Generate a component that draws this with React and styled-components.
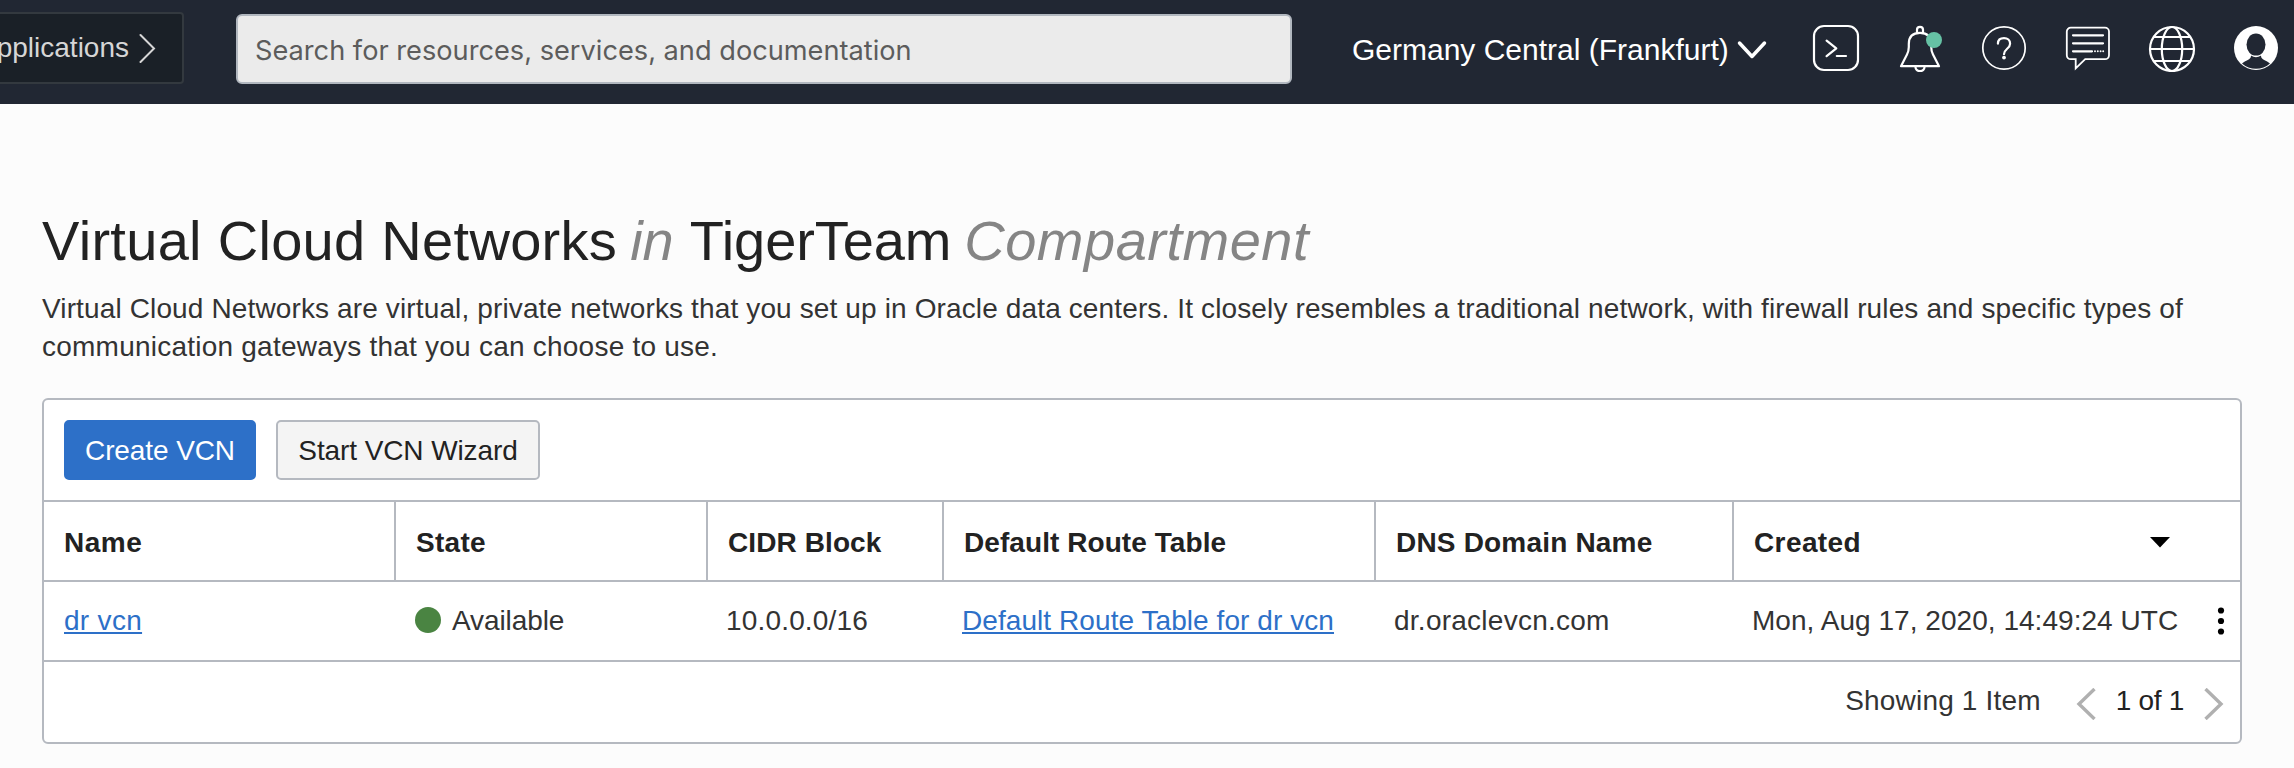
import React from "react";
import styled, { createGlobalStyle } from "styled-components";

const line = "#b5b9c0";

const GlobalStyle = createGlobalStyle`
  *, *::before, *::after { box-sizing: border-box; }
  body {
    margin: 0;
    background: #fcfcfc;
    color: #333;
    font-family: "Liberation Sans", Arial, sans-serif;
    font-size: 28px;
    overflow: hidden;
  }
`;

const Page = styled.div`
  width: 2294px;
  height: 768px;
  overflow: hidden;
`;

const TopBar = styled.header`
  display: flex;
  height: 104px;
  padding-right: 14px;
  background: #212733;
  color: #fff;
`;

const AppsButton = styled.div`
  display: flex;
  align-items: center;
  justify-content: flex-end;
  gap: 10px;
  flex: none;
  width: 184px;
  height: 72px;
  margin-top: 12px;
  padding-right: 26px;
  background: #1a2027;
  border: 2px solid #33393f;
  border-left: 0;
  border-radius: 0 4px 4px 0;
  color: #d6d6d6;
  white-space: nowrap;
`;

const SearchBox = styled.div`
  flex: none;
  width: 1056px;
  height: 70px;
  margin: 14px 0 0 52px;
  padding: 1px 0 0 17px;
  background: #ebebeb;
  border: 2px solid #b1b7bf;
  border-radius: 6px;
  color: #5c5c5c;
  font-family: Inter, sans-serif;
  font-size: 27.2px;
  line-height: 67px;
  white-space: nowrap;
`;

const Region = styled.div`
  display: flex;
  align-items: center;
  gap: 7px;
  height: 100px;
  margin-left: 60px;
  font-size: 30px;
  white-space: nowrap;
`;

const IconRow = styled.nav`
  display: flex;
  align-items: center;
  gap: 36px;
  height: 96px;
  margin-left: auto;
`;

const IconSvg = styled.svg`
  display: block;
  width: 48px;
  height: 48px;
  fill: none;
  stroke: #fff;
  stroke-width: 2.2;
  stroke-linecap: round;
  stroke-linejoin: round;
`;

const Glyph = styled.svg`
  display: block;
  flex: none;
  fill: none;
  stroke: currentColor;
`;

const Main = styled.main`
  padding: 105px 52px 0 42px;
`;

const Title = styled.h1`
  display: flex;
  align-items: baseline;
  gap: 13px;
  margin: 0;
  color: #222;
  font-size: 56px;
  font-weight: 400;
  line-height: 64px;
`;

const TitlePart = styled.span`
  letter-spacing: ${(p) => p.$track || 0}px;
`;

const TitleMuted = styled.em`
  margin-right: ${(p) => p.$after || 0}px;
  color: #858585;
  letter-spacing: ${(p) => p.$track || 0}px;
`;

const Intro = styled.p`
  margin: 17px 0 0;
  line-height: 38px;
  white-space: nowrap;
`;

const Text = styled.span`
  letter-spacing: ${(p) => p.$track || 0}px;
  white-space: nowrap;
`;

const Panel = styled.section`
  width: 2200px;
  margin-top: 32px;
  background: #fff;
  border: 2px solid ${line};
  border-radius: 6px;
`;

const Toolbar = styled.div`
  display: flex;
  gap: 20px;
  padding: 20px;
`;

const Button = styled.button`
  width: ${(p) => p.$width}px;
  height: 60px;
  padding: 2px 0 0;
  border: 2px solid ${(p) => (p.$primary ? "#2d70c8" : line)};
  border-radius: 5px;
  background: ${(p) => (p.$primary ? "#2d70c8" : "#f4f4f4")};
  color: ${(p) => (p.$primary ? "#fff" : "#222")};
  font: inherit;
  letter-spacing: -0.1px;
  white-space: nowrap;
`;

const Row = styled.div`
  display: grid;
  grid-template-columns: 350px 312px 236px 432px 358px 508px;
  height: 80px;
  border-top: 2px solid ${line};
`;

const HeadCell = styled.div`
  display: flex;
  align-items: center;
  justify-content: space-between;
  padding: 3px 70px 0 20px;
  color: #222;
  font-weight: 700;
  white-space: nowrap;

  & + & { border-left: 2px solid ${line}; }
  &:not(:last-child) { padding-right: 0; }
`;

const Cell = styled.div`
  display: flex;
  align-items: center;
  justify-content: ${(p) => (p.$spread ? "space-between" : "flex-start")};
  padding: 0 15px 0 20px;
`;

const Link = styled.a`
  color: #2d70c8;
  letter-spacing: ${(p) => p.$track || 0}px;
  text-decoration: underline;
  text-decoration-thickness: 2px;
  text-underline-offset: 2px;
  white-space: nowrap;
`;

const StatusDot = styled.span`
  flex: none;
  width: 26px;
  height: 26px;
  margin: 0 11px 2px 1px;
  border-radius: 50%;
  background: #4a8442;
`;

const Footer = styled.footer`
  display: flex;
  align-items: center;
  justify-content: flex-end;
  height: 82px;
  padding: 0 16px 2px 0;
  border-top: 2px solid ${line};
`;

const Pager = styled.div`
  display: flex;
  align-items: center;
  gap: 20px;
  margin-left: 35px;
  color: #222;
`;

const PagerArrow = styled(Glyph)`
  margin-top: 5px;
  color: #b0b0b0;
`;

const TerminalIcon = () => (
  <IconSvg viewBox="0 0 48 48">
    <rect x="2" y="2" width="44" height="44" rx="10" />
    <path d="M14.6 16.6 24.3 24.4 14.6 32.2M24.8 32H34" />
  </IconSvg>
);

const BellIcon = () => (
  <IconSvg viewBox="0 0 48 48">
    <path d="M21 8.5V5.8a3 3 0 0 1 6 0v2.7" />
    <path d="M5 42.2 11 30.5Q12.8 26.8 12.8 23V20C12.8 12.5 17 8.8 24 8.8S35.2 12.5 35.2 20v3Q35.2 26.8 37 30.5L43 42.2Z" />
    <path d="M19.4 42.6a4.6 4.6 0 0 0 9.2 0" />
    <circle cx="38" cy="16" r="8" fill="#66c2a5" stroke="none" />
  </IconSvg>
);

const HelpIcon = () => (
  <IconSvg viewBox="0 0 48 48">
    <circle cx="24" cy="24" r="21.2" strokeWidth="1.7" />
    <path d="M17.9 19.6C18 16.2 20.4 14.2 24 14.2s6.1 2.1 6.1 5.5C30.1 24.6 24 25 24 30.2" />
    <circle cx="24" cy="33.6" r="1.9" fill="#fff" stroke="none" />
  </IconSvg>
);

const ChatIcon = () => (
  <IconSvg viewBox="0 0 48 48">
    <path
      strokeWidth="1.8"
      strokeLinejoin="miter"
      d="M6.8 3.6H41a4 4 0 0 1 4 4v23.6a4 4 0 0 1-4 4H21.2L11.7 44.4V35.2H6.8a4 4 0 0 1-4-4V7.6a4 4 0 0 1 4-4Z"
    />
    <path d="M9 11.3H39M9 19.3H39M9 27.3H28" />
    <path d="M31 27.3h.01M33.8 27.3h.01M36.6 27.3h.01M39.2 27.3h.01" strokeWidth="1.9" />
  </IconSvg>
);

const GlobeIcon = () => (
  <IconSvg viewBox="0 0 48 48">
    <circle cx="24" cy="25" r="22" />
    <ellipse cx="24" cy="25" rx="10.2" ry="22" />
    <path d="M2 25H46M6.2 13H41.8M6.2 37H41.8" />
  </IconSvg>
);

const UserIcon = () => (
  <IconSvg viewBox="0 0 48 48">
    <circle cx="24" cy="24" r="22" fill="#fff" stroke="none" />
    <g fill="#212733" stroke="none">
      <ellipse cx="24" cy="20.6" rx="9.5" ry="11" />
      <path d="M19 31.6C19.2 36 13.4 36.6 10 39.4A20.8 20.8 0 0 0 38 39.4C34.6 36.6 28.8 36 29 31.6Q24 34.8 19 31.6Z" />
    </g>
  </IconSvg>
);

export default function App() {
  return (
    <Page>
      <GlobalStyle />
      <TopBar>
        <AppsButton>
          <span>Applications</span>
          <Glyph width="17" height="30" viewBox="0 0 17 30" strokeWidth="2" strokeLinecap="round">
            <path d="M1.5 2 15 15.5 1.5 29" />
          </Glyph>
        </AppsButton>
        <SearchBox>Search for resources, services, and documentation</SearchBox>
        <Region>
          <span>Germany Central (Frankfurt)</span>
          <Glyph width="32" height="20" viewBox="0 0 32 20" strokeWidth="3.5" strokeLinecap="round" strokeLinejoin="round">
            <path d="M3.5 3 16 16.5 28.5 3" />
          </Glyph>
        </Region>
        <IconRow>
          <TerminalIcon />
          <BellIcon />
          <HelpIcon />
          <ChatIcon />
          <GlobeIcon />
          <UserIcon />
        </IconRow>
      </TopBar>

      <Main>
        <Title>
          <TitlePart $track={0.3}>Virtual Cloud Networks</TitlePart>
          <TitleMuted $after={3}>in</TitleMuted>
          <TitlePart $track={-0.1}>TigerTeam</TitlePart>
          <TitleMuted $track={0.5}>Compartment</TitleMuted>
        </Title>
        <Intro>
          <Text $track={0.131}>
            Virtual Cloud Networks are virtual, private networks that you set up in Oracle data centers. It closely
            resembles a traditional network, with firewall rules and specific types of
          </Text>
          <br />
          <Text $track={0.23}>communication gateways that you can choose to use.</Text>
        </Intro>

        <Panel>
          <Toolbar>
            <Button $primary $width={192}>Create VCN</Button>
            <Button $width={264}>Start VCN Wizard</Button>
          </Toolbar>
          <Row>
            <HeadCell><Text $track={0.5}>Name</Text></HeadCell>
            <HeadCell><Text $track={0.3}>State</Text></HeadCell>
            <HeadCell><Text $track={0.1}>CIDR Block</Text></HeadCell>
            <HeadCell><Text $track={0.07}>Default Route Table</Text></HeadCell>
            <HeadCell><Text $track={0.19}>DNS Domain Name</Text></HeadCell>
            <HeadCell>
              <Text $track={0.4}>Created</Text>
              <Glyph width="20" height="12" viewBox="0 0 20 12">
                <path d="M0 0H20L10 10.5Z" fill="#000" stroke="none" />
              </Glyph>
            </HeadCell>
          </Row>
          <Row>
            <Cell><Link $track={0.3}>dr vcn</Link></Cell>
            <Cell>
              <StatusDot />
              <Text $track={-0.1}>Available</Text>
            </Cell>
            <Cell><Text $track={0.17}>10.0.0.0/16</Text></Cell>
            <Cell><Link $track={0.07}>Default Route Table for dr vcn</Link></Cell>
            <Cell><Text $track={0.25}>dr.oraclevcn.com</Text></Cell>
            <Cell $spread>
              <Text $track={0.04}>Mon, Aug 17, 2020, 14:49:24 UTC</Text>
              <Glyph width="8" height="30" viewBox="0 0 8 30">
                <g fill="#000" stroke="none">
                  <circle cx="4" cy="4.5" r="3.1" />
                  <circle cx="4" cy="15" r="3.1" />
                  <circle cx="4" cy="25.5" r="3.1" />
                </g>
              </Glyph>
            </Cell>
          </Row>
          <Footer>
            <Text $track={0.18}>Showing 1 Item</Text>
            <Pager>
              <PagerArrow width="20" height="32" viewBox="0 0 20 32" strokeWidth="3.4">
                <path d="M18.5 1 3 16 18.5 31" />
              </PagerArrow>
              <Text $track={-0.3}>1 of 1</Text>
              <PagerArrow width="20" height="32" viewBox="0 0 20 32" strokeWidth="3.4">
                <path d="M1.5 1 17 16 1.5 31" />
              </PagerArrow>
            </Pager>
          </Footer>
        </Panel>
      </Main>
    </Page>
  );
}
